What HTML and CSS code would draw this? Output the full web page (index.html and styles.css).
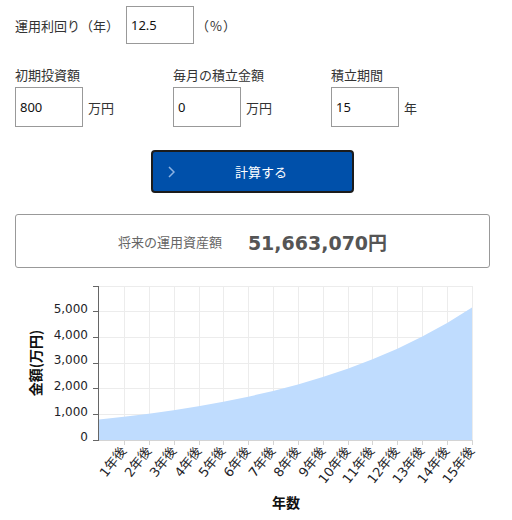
FILE: index.html
```html
<!DOCTYPE html>
<html lang="ja">
<head>
<meta charset="utf-8">
<title>資産運用シミュレーション</title>
<link rel="stylesheet" href="styles.css">
</head>
<body>
<div class="calc">
  <div class="rate-row">
    <span class="rate-lbl">運用利回り（年）</span>
    <input class="field" type="text" value="12.5">
    <span class="unit unit-pct">（%）</span>
  </div>
  <div class="fields">
    <div class="group">
      <div class="lbl">初期投資額</div>
      <div class="ctl"><input class="field tall" type="text" value="800"><span class="unit">万円</span></div>
    </div>
    <div class="group">
      <div class="lbl">毎月の積立金額</div>
      <div class="ctl"><input class="field tall" type="text" value="0"><span class="unit">万円</span></div>
    </div>
    <div class="group">
      <div class="lbl">積立期間</div>
      <div class="ctl"><input class="field tall" type="text" value="15"><span class="unit">年</span></div>
    </div>
  </div>
  <div class="btn-wrap">
    <button class="calc-btn" type="button">
      <svg class="chev" width="7" height="12" viewBox="0 0 7 12"><path d="M1 1 L6 6 L1 11" fill="none" stroke="#8db3e2" stroke-width="1.5"/></svg>
      <span class="btn-text">計算する</span>
    </button>
  </div>
  <div class="result">
    <span class="res-lbl">将来の運用資産額</span>
    <span class="res-val">51,663,070<span class="yen">円</span></span>
  </div>
</div>
<svg class="chart" width="512" height="250" viewBox="0 0 512 250">
  <g class="grid">
    <line x1="99" y1="16.5" x2="473" y2="16.5"/>
    <line x1="99" y1="41.5" x2="473" y2="41.5"/>
    <line x1="99" y1="67.5" x2="473" y2="67.5"/>
    <line x1="99" y1="93.5" x2="473" y2="93.5"/>
    <line x1="99" y1="118.5" x2="473" y2="118.5"/>
    <line x1="99" y1="144.5" x2="473" y2="144.5"/>
    <line x1="124.5" y1="16" x2="124.5" y2="170"/>
    <line x1="149.5" y1="16" x2="149.5" y2="170"/>
    <line x1="174.5" y1="16" x2="174.5" y2="170"/>
    <line x1="199.5" y1="16" x2="199.5" y2="170"/>
    <line x1="223.5" y1="16" x2="223.5" y2="170"/>
    <line x1="248.5" y1="16" x2="248.5" y2="170"/>
    <line x1="273.5" y1="16" x2="273.5" y2="170"/>
    <line x1="298.5" y1="16" x2="298.5" y2="170"/>
    <line x1="323.5" y1="16" x2="323.5" y2="170"/>
    <line x1="348.5" y1="16" x2="348.5" y2="170"/>
    <line x1="372.5" y1="16" x2="372.5" y2="170"/>
    <line x1="397.5" y1="16" x2="397.5" y2="170"/>
    <line x1="422.5" y1="16" x2="422.5" y2="170"/>
    <line x1="447.5" y1="16" x2="447.5" y2="170"/>
    <line x1="472.5" y1="16" x2="472.5" y2="170"/>
  </g>
  <polygon class="area" points="99,170 99,149.47 123.87,146.75 148.73,143.67 173.6,140.18 198.47,136.23 223.33,131.76 248.2,126.7 273.07,120.97 297.93,114.47 322.8,107.12 347.67,98.79 372.53,89.37 397.4,78.69 422.27,66.6 447.13,52.91 472,37.4 472,170"/>
  <g class="xaxis">
    <line x1="99" y1="170.5" x2="473" y2="170.5"/>
    <line x1="124.5" y1="170" x2="124.5" y2="175"/>
    <line x1="149.5" y1="170" x2="149.5" y2="175"/>
    <line x1="174.5" y1="170" x2="174.5" y2="175"/>
    <line x1="199.5" y1="170" x2="199.5" y2="175"/>
    <line x1="223.5" y1="170" x2="223.5" y2="175"/>
    <line x1="248.5" y1="170" x2="248.5" y2="175"/>
    <line x1="273.5" y1="170" x2="273.5" y2="175"/>
    <line x1="298.5" y1="170" x2="298.5" y2="175"/>
    <line x1="323.5" y1="170" x2="323.5" y2="175"/>
    <line x1="348.5" y1="170" x2="348.5" y2="175"/>
    <line x1="372.5" y1="170" x2="372.5" y2="175"/>
    <line x1="397.5" y1="170" x2="397.5" y2="175"/>
    <line x1="422.5" y1="170" x2="422.5" y2="175"/>
    <line x1="447.5" y1="170" x2="447.5" y2="175"/>
    <line x1="472.5" y1="170" x2="472.5" y2="175"/>
  </g>
  <g class="yaxis">
    <line x1="98.5" y1="16" x2="98.5" y2="171"/>
    <line x1="93" y1="16.5" x2="98.5" y2="16.5"/>
    <line x1="93" y1="41.5" x2="98.5" y2="41.5"/>
    <line x1="93" y1="67.5" x2="98.5" y2="67.5"/>
    <line x1="93" y1="93.5" x2="98.5" y2="93.5"/>
    <line x1="93" y1="118.5" x2="98.5" y2="118.5"/>
    <line x1="93" y1="144.5" x2="98.5" y2="144.5"/>
    <line x1="93" y1="170.5" x2="98.5" y2="170.5"/>
  </g>
  <g class="ylabels">
    <text x="88" y="43">5,000</text>
    <text x="88" y="68.5">4,000</text>
    <text x="88" y="94">3,000</text>
    <text x="88" y="119.5">2,000</text>
    <text x="88" y="145.5">1,000</text>
    <text x="88" y="171">0</text>
  </g>
  <g class="xlabels">
    <text transform="translate(127,181) rotate(-52)">1年後</text>
    <text transform="translate(152,181) rotate(-52)">2年後</text>
    <text transform="translate(177,181) rotate(-52)">3年後</text>
    <text transform="translate(202,181) rotate(-52)">4年後</text>
    <text transform="translate(226,181) rotate(-52)">5年後</text>
    <text transform="translate(251,181) rotate(-52)">6年後</text>
    <text transform="translate(276,181) rotate(-52)">7年後</text>
    <text transform="translate(301,181) rotate(-52)">8年後</text>
    <text transform="translate(326,181) rotate(-52)">9年後</text>
    <text transform="translate(351,181) rotate(-52)">10年後</text>
    <text transform="translate(375,181) rotate(-52)">11年後</text>
    <text transform="translate(400,181) rotate(-52)">12年後</text>
    <text transform="translate(425,181) rotate(-52)">13年後</text>
    <text transform="translate(450,181) rotate(-52)">14年後</text>
    <text transform="translate(475,181) rotate(-52)">15年後</text>
  </g>
  <text class="axis-title" transform="translate(41,93) rotate(-90)">金額(万円)</text>
  <text class="axis-title" x="286" y="238">年数</text>
</svg>
</body>
</html>
```

FILE: styles.css
```css
* { box-sizing: border-box; }

body {
  margin: 0;
  background: #fff;
  font-family: "Noto Sans CJK JP", sans-serif;
  font-size: 13px;
  color: #333;
}

.calc {
  padding: 6px 22px 0 15px;
}

.rate-row {
  display: flex;
  align-items: center;
  height: 38px;
}

.rate-lbl {
  width: 111px;
  flex: none;
  white-space: nowrap;
}

.field {
  width: 68px;
  height: 38px;
  border: 1px solid #999;
  border-radius: 0;
  padding: 0 4px;
  margin: 0;
  font-family: "Noto Sans", sans-serif;
  font-size: 13px;
  color: #111;
  background: #fff;
  outline: none;
}

.field.tall { height: 40px; }

.unit { margin-left: 5px; }
.unit-pct { margin-left: 2px; letter-spacing: 1px; }

.fields {
  display: grid;
  grid-template-columns: 158px 158px 158px;
  margin-top: 22px;
}

.lbl {
  line-height: 18px;
  height: 18px;
  white-space: nowrap;
}

.ctl {
  display: flex;
  align-items: center;
  margin-top: 3px;
}

.btn-wrap {
  display: flex;
  justify-content: center;
  margin-top: 23px;
}

.calc-btn {
  display: flex;
  align-items: center;
  width: 203px;
  height: 43px;
  margin: 0;
  padding: 0 5px 0 15px;
  background: #0050aa;
  border: 2px solid #1c1c1c;
  border-radius: 4px;
  color: #fff;
  font-family: "Noto Sans CJK JP", sans-serif;
  font-size: 13px;
  cursor: pointer;
}

.chev { flex: none; display: block; }

.btn-text {
  flex: 1;
  text-align: center;
}

.result {
  display: flex;
  align-items: center;
  justify-content: center;
  gap: 26px;
  height: 54px;
  margin-top: 21px;
  border: 1px solid #999;
  border-radius: 3px;
}

.res-lbl {
  color: #666;
  font-size: 13px;
}

.res-val {
  font-family: "DejaVu Sans", "Noto Sans CJK JP", sans-serif;
  font-weight: bold;
  font-size: 19px;
  color: #555;
}

.yen {
  font-family: "Noto Sans CJK JP", sans-serif;
  font-size: 19px;
}

.chart {
  display: block;
  margin-top: 2px;
}

.grid line {
  stroke: #ececec;
  stroke-width: 1;
}

.area {
  fill: #bfdcfe;
}

.xaxis line {
  stroke: #d4d4d4;
  stroke-width: 1;
}

.yaxis line {
  stroke: #666;
  stroke-width: 1;
}

.ylabels text {
  font-family: "DejaVu Sans", sans-serif;
  font-size: 12px;
  fill: #1e1e28;
  text-anchor: end;
}

.xlabels text {
  font-family: "DejaVu Sans", "Noto Sans CJK JP", sans-serif;
  font-size: 13px;
  fill: #1e1e28;
  text-anchor: end;
}

.axis-title {
  font-family: "Noto Sans CJK JP", sans-serif;
  font-size: 14px;
  font-weight: bold;
  fill: #111;
  text-anchor: middle;
}
```
